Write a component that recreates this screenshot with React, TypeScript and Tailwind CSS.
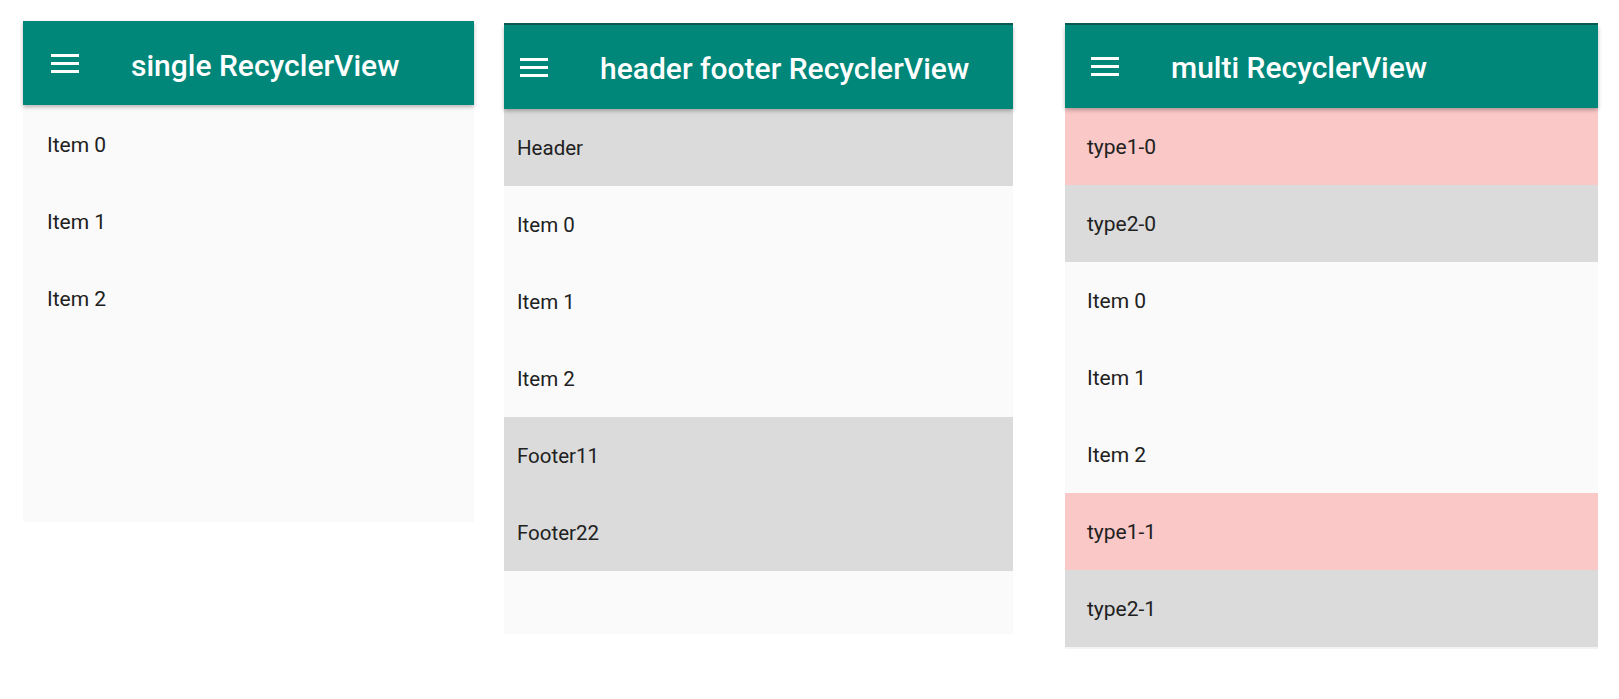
import React from "react";

const font = { fontFamily: "Roboto, 'Noto Sans', sans-serif" };

function Hamburger() {
  return (
    <div className="flex w-[28px] flex-col gap-[5px]">
      <div className="h-[3px] w-full bg-white" />
      <div className="h-[3px] w-full bg-white" />
      <div className="h-[3px] w-full bg-white" />
    </div>
  );
}

function Row({ text, bg, pl, size, pt }: { text: string; bg: string; pl: string; size: string; pt: string }) {
  return (
    <div className={`flex h-[77px] items-center text-[#212121] ${pt} ${size} ${bg} ${pl}`}>
      {text}
    </div>
  );
}

export default function App() {
  return (
    <div className="flex min-h-[699px] w-[1619px] items-start bg-white pl-[23px]" style={font}>
      {/* Panel 1 */}
      <div className="mt-[21px] flex w-[451px] flex-col bg-[#fafafa]">
        <div className="relative z-10 flex h-[84px] items-center bg-[#00877a] pl-[28px] shadow-[0_2px_4px_rgba(0,0,0,0.28)]">
          <Hamburger />
          <span className="ml-[52px] pt-[4px] text-[30px] font-medium text-white">single RecyclerView</span>
        </div>
        <div className="flex h-[417px] flex-col">
          <Row text="Item 0" bg="bg-[#fafafa]" pl="pl-[24px]" size="text-[21px]" pt="pt-[5px]" />
          <Row text="Item 1" bg="bg-[#fafafa]" pl="pl-[24px]" size="text-[21px]" pt="pt-[5px]" />
          <Row text="Item 2" bg="bg-[#fafafa]" pl="pl-[24px]" size="text-[21px]" pt="pt-[5px]" />
        </div>
      </div>

      {/* Panel 2 */}
      <div className="ml-[30px] mt-[23px] flex w-[509px] flex-col bg-[#fafafa]">
        <div className="h-[2px] bg-[#0a5c53]" />
        <div className="relative z-10 flex h-[84px] items-center bg-[#00877a] pl-[16px] shadow-[0_2px_4px_rgba(0,0,0,0.28)]">
          <Hamburger />
          <span className="ml-[52px] pt-[3px] text-[30px] font-medium text-white">header footer RecyclerView</span>
        </div>
        <Row text="Header" bg="bg-[#dbdbdb]" pl="pl-[13px]" size="text-[20.5px]" pt="pt-[1px]" />
        <Row text="Item 0" bg="bg-[#fafafa]" pl="pl-[13px]" size="text-[20.5px]" pt="pt-[1px]" />
        <Row text="Item 1" bg="bg-[#fafafa]" pl="pl-[13px]" size="text-[20.5px]" pt="pt-[1px]" />
        <Row text="Item 2" bg="bg-[#fafafa]" pl="pl-[13px]" size="text-[20.5px]" pt="pt-[1px]" />
        <Row text="Footer11" bg="bg-[#dbdbdb]" pl="pl-[13px]" size="text-[20.5px]" pt="pt-[1px]" />
        <Row text="Footer22" bg="bg-[#dbdbdb]" pl="pl-[13px]" size="text-[20.5px]" pt="pt-[1px]" />
        <div className="h-[63px] bg-[#fafafa]" />
      </div>

      {/* Panel 3 */}
      <div className="ml-[52px] mt-[23px] flex w-[533px] flex-col bg-[#fafafa]">
        <div className="h-[2px] bg-[#0a5c53]" />
        <div className="relative z-10 flex h-[83px] items-center bg-[#00877a] pl-[26px] shadow-[0_2px_4px_rgba(0,0,0,0.28)]">
          <Hamburger />
          <span className="ml-[52px] pt-[2px] text-[30px] font-medium text-white">multi RecyclerView</span>
        </div>
        <Row text="type1-0" bg="bg-[#f9c8c7]" pl="pl-[22px]" size="text-[21px]" pt="pt-[3px]" />
        <Row text="type2-0" bg="bg-[#dbdbdb]" pl="pl-[22px]" size="text-[21px]" pt="pt-[3px]" />
        <Row text="Item 0" bg="bg-[#fafafa]" pl="pl-[22px]" size="text-[21px]" pt="pt-[3px]" />
        <Row text="Item 1" bg="bg-[#fafafa]" pl="pl-[22px]" size="text-[21px]" pt="pt-[3px]" />
        <Row text="Item 2" bg="bg-[#fafafa]" pl="pl-[22px]" size="text-[21px]" pt="pt-[3px]" />
        <Row text="type1-1" bg="bg-[#f9c8c7]" pl="pl-[22px]" size="text-[21px]" pt="pt-[3px]" />
        <Row text="type2-1" bg="bg-[#dbdbdb]" pl="pl-[22px]" size="text-[21px]" pt="pt-[3px]" />
        <div className="h-[2px] bg-[#f3f3f3]" />
      </div>
    </div>
  );
}
